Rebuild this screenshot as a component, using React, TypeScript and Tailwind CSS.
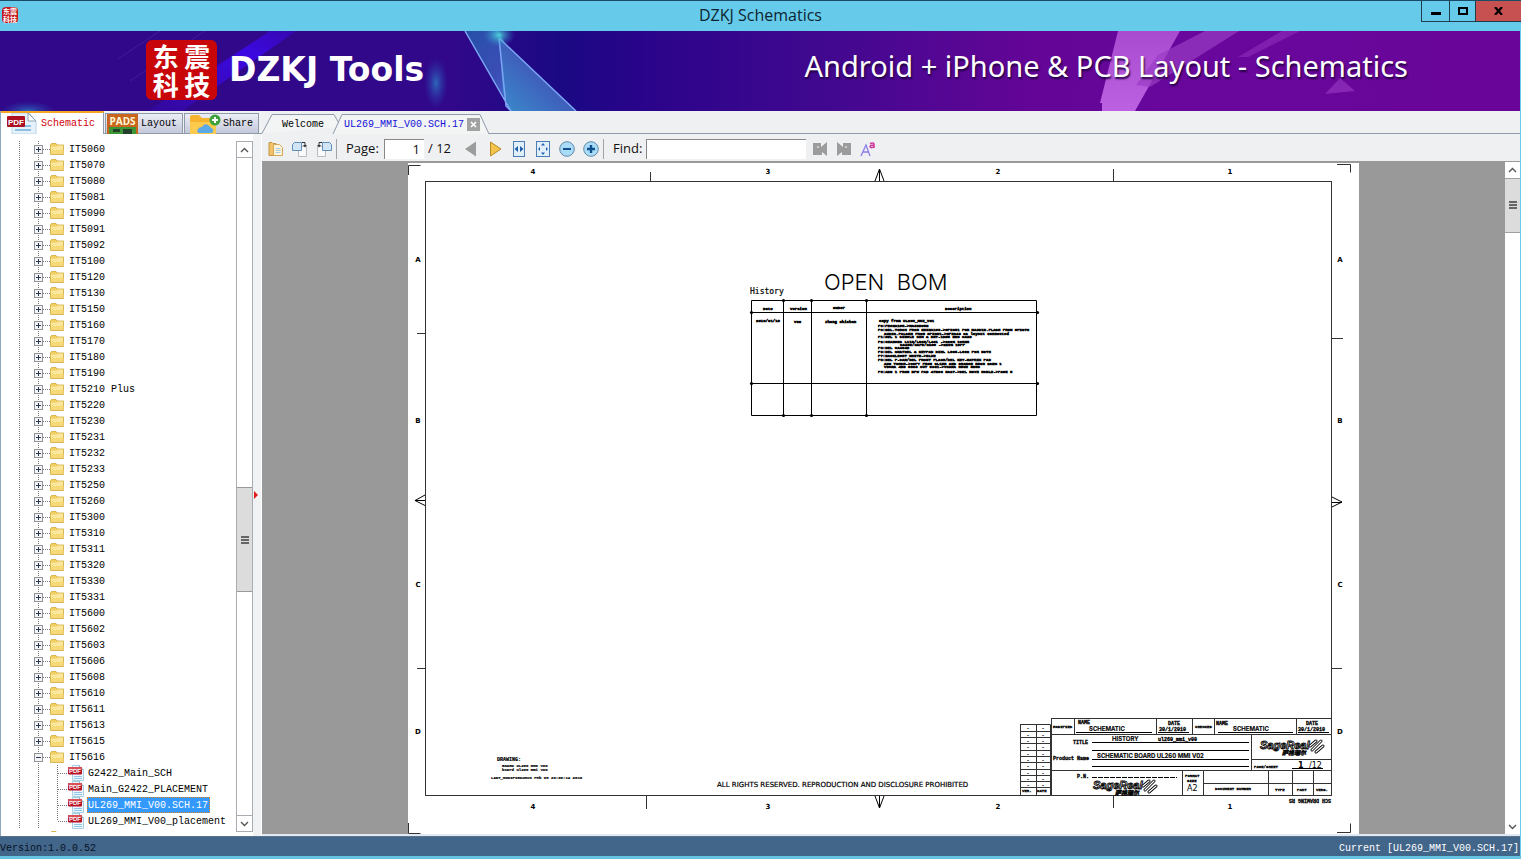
import React from 'react';

const folders = [
  'IT5060', 'IT5070', 'IT5080', 'IT5081', 'IT5090', 'IT5091', 'IT5092', 'IT5100', 'IT5120', 'IT5130',
  'IT5150', 'IT5160', 'IT5170', 'IT5180', 'IT5190', 'IT5210 Plus', 'IT5220', 'IT5230', 'IT5231', 'IT5232',
  'IT5233', 'IT5250', 'IT5260', 'IT5300', 'IT5310', 'IT5311', 'IT5320', 'IT5330', 'IT5331', 'IT5600',
  'IT5602', 'IT5603', 'IT5606', 'IT5608', 'IT5610', 'IT5611', 'IT5613', 'IT5615', 'IT5616'
];

const files = ['G2422_Main_SCH', 'Main_G2422_PLACEMENT', 'UL269_MMI_V00.SCH.17', 'UL269_MMI_V00_placement'];

const openFolder = 'IT5616';
const openFile = 'UL269_MMI_V00.SCH.17';

const FolderIcon: React.FC = () => (
  <svg width="15" height="16" viewBox="0 0 15 16" className="shrink-0">
    <path d="M.5 3.5 1.5 2.5H6l1 1.5h6.5V13.5H.5z" fill="#f0cf62" stroke="#d9b654" />
    <path d="M1 5.5h6l1-1h5V13H1z" fill="#fbe79c" />
    <path d="M1 9h12.5v4H1z" fill="#f6d978" />
  </svg>
);

const PdfIcon: React.FC = () => (
  <svg viewBox="0 0 16 16" className="h-4 w-4 shrink-0">
    <path d="M4.5.5h7l4 4v11h-11z" fill="#eef7fd" stroke="#a9cfe4" />
    <path d="M11.5.5v4h4" fill="#fff" stroke="#7fa9c2" />
    <path d="M6 11.5h8M6 13.5h8" stroke="#8cc6e8" />
    <rect x="0" y="2" width="14" height="7.500" rx="1" fill="#b90f22" />
    <rect x="0" y="2" width="14" height="3" rx="1" fill="#d8505a" />
    <text x="7" y="8" textAnchor="middle" fontSize="6" fontWeight="700" fill="#fff" fontFamily="Liberation Sans, sans-serif">PDF</text>
  </svg>
);

/* Dotted branch lines plus the expander box of a folder */
const Expander: React.FC<{ open: boolean }> = ({ open }) => (
  <svg width="16" height="16" viewBox="0 0 16 16">
    <path d="M4.500 0v16M9 8.500h7" stroke="#777" strokeDasharray="1 1" />
    <rect x=".5" y="4.500" width="8" height="8" fill="#f4f4f4" stroke="#8f9399" />
    <path d={open ? 'M2 8.500h5' : 'M2 8.500h5M4.500 6v5'} stroke="#26375a" />
  </svg>
);

const UpArrow: React.FC = () => (
  <svg width="9" height="6" viewBox="0 0 9 6"><path d="M1 5 4.500 1.500 8 5" fill="none" stroke="#555" strokeWidth="1.400" /></svg>
);

const DownArrow: React.FC = () => (
  <svg width="9" height="6" viewBox="0 0 9 6"><path d="M1 1 4.500 4.500 8 1" fill="none" stroke="#555" strokeWidth="1.400" /></svg>
);

const Grip: React.FC = () => (
  <svg width="8" height="8" viewBox="0 0 8 8"><path d="M0 1h8M0 4h8M0 7h8" stroke="#666" strokeWidth="2" /></svg>
);

const TitleBar: React.FC = () => (
  <header className="relative flex h-[31px] shrink-0 items-start justify-between border-t border-[#1b4a66] bg-[#66cbea]">
    <span className="mt-1.5 ml-0.5 grid h-4 w-4 grid-cols-2 place-items-center rounded-sm bg-[#c4161c] px-px font-['Noto_Sans_CJK_SC',sans-serif] text-[7px] leading-[7px] font-bold text-white">
      <span>东</span><span>震</span><span>科</span><span>技</span>
    </span>
    <h1 className="absolute inset-x-0 top-0 text-center font-['Open_Sans',sans-serif] text-base leading-[29px] text-[#0c2530]">DZKJ Schematics</h1>
    <div className="relative flex h-[21px] border-b border-l border-[#1f3c4a]">
      <button aria-label="Minimize" className="flex w-7 items-center justify-center border-r border-[#1f3c4a]">
        <svg width="10" height="10" viewBox="0 0 10 10"><path d="M0 7.500h10" stroke="#000" strokeWidth="3" /></svg>
      </button>
      <button aria-label="Maximize" className="flex w-[26px] items-center justify-center border-r border-[#1f3c4a]">
        <svg width="10" height="8" viewBox="0 0 10 8"><rect x="1" y="1" width="8" height="6" fill="none" stroke="#000" strokeWidth="2" /></svg>
      </button>
      <button aria-label="Close" className="flex w-[45px] items-center justify-center bg-[#c75050]">
        <svg width="9" height="8" viewBox="0 0 9 8"><path d="M1 0 8 8M8 0 1 8" stroke="#000" strokeWidth="2.200" /></svg>
      </button>
    </div>
  </header>
);

const Banner: React.FC = () => (
  <section className="relative mr-px h-20 shrink-0 overflow-hidden bg-[#6b0699]">
    <svg className="absolute inset-0 h-full w-full" viewBox="0 0 1520 80" preserveAspectRatio="xMinYMin slice">
      <defs>
        <linearGradient id="bg">
          <stop offset="0" stopColor="#300889" />
          <stop offset=".3" stopColor="#300889" />
          <stop offset=".37" stopColor="#1a0983" />
          <stop offset=".42" stopColor="#29048a" />
          <stop offset=".54" stopColor="#40088f" />
          <stop offset=".68" stopColor="#640597" />
          <stop offset=".78" stopColor="#69079c" />
          <stop offset="1" stopColor="#690599" />
        </linearGradient>
        <linearGradient id="ray" x1="0" y1="1" x2="1" y2="0">
          <stop offset="0" stopColor="#3b0ae0" stopOpacity=".2" />
          <stop offset=".7" stopColor="#3c08e2" />
          <stop offset="1" stopColor="#3c08e2" stopOpacity=".4" />
        </linearGradient>
        <linearGradient id="shard" x1="0" y1="0" x2="1" y2="1">
          <stop offset="0" stopColor="#2550a8" />
          <stop offset=".6" stopColor="#3b4db4" />
          <stop offset="1" stopColor="#4a6fd0" />
        </linearGradient>
        <linearGradient id="facet" x1="0" y1="1" x2="1" y2="0">
          <stop offset="0" stopColor="#3a8ccc" />
          <stop offset=".6" stopColor="#4055b8" />
          <stop offset="1" stopColor="#4055b8" />
        </linearGradient>
        <linearGradient id="pink" x2="0" y2="1">
          <stop offset="0" stopColor="#b052d4" />
          <stop offset="1" stopColor="#c56bea" />
        </linearGradient>
        <radialGradient id="glow">
          <stop offset="0" stopColor="#2b7fc4" stopOpacity=".8" />
          <stop offset="1" stopColor="#2b3fb4" stopOpacity="0" />
        </radialGradient>
        <radialGradient id="spark">
          <stop offset="0" stopColor="#4fe0e0" stopOpacity=".9" />
          <stop offset="1" stopColor="#2b80c4" stopOpacity="0" />
        </radialGradient>
      </defs>
      <rect width="1520" height="80" fill="url(#bg)" />
      <path d="M270 0h26L182 80h-34z" fill="url(#ray)" />
      <path d="M205 0 130 50M160 0l-42 28" stroke="#5a2bb0" strokeOpacity=".5" />
      <ellipse cx="436" cy="52" rx="12" ry="26" fill="url(#glow)" />
      <ellipse cx="28" cy="80" rx="28" ry="10" fill="url(#glow)" />
      <path d="M465 0h34l5 10 8 70z" fill="url(#shard)" />
      <path d="M499 7 576 80H511L503 62z" fill="url(#facet)" />
      <path d="M465 0 511 80M499 7l77 73M499 7l7 68 5 5" fill="none" stroke="#7ba6f4" strokeWidth="1.500" />
      <ellipse cx="499" cy="4" rx="16" ry="12" fill="url(#spark)" />
      <path d="M1118 0h62L1135 80h-33V72h-2z" fill="url(#pink)" fillOpacity=".9" />
      <path d="M1205 0h34L1150 56l-14-2 22-30z" fill="#9a3cc4" fillOpacity=".7" />
      <path d="M1282 0h18l-52 26h-10z" fill="#8626b4" fillOpacity=".8" />
      <path d="m1340 47 15 13-30 3z" fill="#8626b4" />
    </svg>
    <div className="relative flex h-full items-center justify-between pr-28 pb-0.5 pl-[146px]">
      <div className="flex items-center">
        <div className="grid h-[60px] w-[71px] grid-cols-2 content-center justify-items-center rounded-md bg-[#c8060a] px-1 font-['Noto_Sans_CJK_SC',sans-serif] text-[26px] leading-7 font-bold text-white">
          <span>东</span><span>震</span><span>科</span><span>技</span>
        </div>
        <h2 className="ml-3 font-['DejaVu_Sans',sans-serif] text-[33px] leading-10 font-bold text-white">DZKJ Tools</h2>
      </div>
      <p className="pb-2 font-['Noto_Sans',sans-serif] text-[29px] leading-10 text-white [text-shadow:1px_2px_2px_#200040]">
        Android + iPhone &amp; PCB Layout - Schematics
      </p>
    </div>
  </section>
);

const SideTabs: React.FC = () => (
  <nav className="flex h-[23px] shrink-0 items-stretch gap-px border-b border-[#8f9bab] bg-[#f0f1f2]">
    <button className="-mb-px flex w-[103px] items-center gap-1 border-t-2 border-r border-t-[#f5a623] border-r-[#8f9bab] bg-white pl-[5px] text-[#d0000c]">
      <svg width="31" height="21" viewBox="0 0 31 21">
        <path d="M6 0h17l7 8v13H6z" fill="#e6f2fb" stroke="#b8d4e6" />
        <path d="M22 0v8h8z" fill="#fff" stroke="#8fa5b4" />
        <path d="M9 13h16M9 17h16" stroke="#8ebfe0" strokeWidth="2" />
        <rect x="1" y="3" width="18" height="11" rx="1" fill="#ad1020" />
        <text x="10" y="12" textAnchor="middle" fontSize="8" fontWeight="700" fill="#fff" fontFamily="Liberation Sans, sans-serif">PDF</text>
      </svg>
      Schematic
    </button>
    <button className="mt-0.5 flex w-[78px] items-center gap-[3px] border border-b-0 border-[#8f9bab] bg-linear-to-b from-[#eceef6] to-[#c4c8da] pl-px">
      <svg width="31" height="20" viewBox="0 0 31 20">
        <rect width="31" height="20" fill="#c8651e" />
        <rect x="2" y="13" width="27" height="7" fill="#3c9636" />
        <path d="M6 15h7v3H6zM16 15h9v5h-9z" fill="#23402a" />
        <text x="15.500" y="11" textAnchor="middle" fontSize="10" fontWeight="700" fill="#fff8d8" fontFamily="Open Sans, sans-serif">PADS</text>
      </svg>
      Layout
    </button>
    <button className="mt-0.5 flex w-[75px] items-center gap-0.5 border border-b-0 border-[#8f9bab] bg-linear-to-b from-[#eceef6] to-[#c4c8da] pl-1">
      <svg width="32" height="20" viewBox="0 0 32 20">
        <path d="M1 3q0-2 2-2h7l3 3h12q2 0 2 2v14H1z" fill="#f5b32e" />
        <path d="M1 8h26v12H1z" fill="#fcca4c" />
        <path d="M10 19q-3-1-1-4 1-2 4-2 2-4 6-2 3 2 3 3 4 1 1 5z" fill="#5ba9e6" />
        <circle cx="26" cy="6" r="5.500" fill="#3ea23c" />
        <path d="M26 3v6M23 6h6" stroke="#fff" strokeWidth="2" />
      </svg>
      Share
    </button>
  </nav>
);

const Sidebar: React.FC = () => (
  <aside className="flex w-[262px] shrink-0 flex-col border-l border-[#8fa6bb] bg-white text-[10px]">
    <SideTabs />
    <div className="flex min-h-0 flex-1">
      <ul className="mt-[7px] mb-1 min-w-0 flex-1 overflow-hidden">
        {folders.map((name) => (
          <li key={name} className="flex h-4 items-center">
            <svg width="33" height="16" viewBox="0 0 33 16" className="shrink-0"><path d="M18.500 0v16" stroke="#777" strokeDasharray="1 1" /></svg>
            <button aria-label={name} aria-expanded={name === openFolder} className="shrink-0"><Expander open={name === openFolder} /></button>
            <FolderIcon />
            <span className="ml-1">{name}</span>
          </li>
        ))}
        {files.map((name, index) => (
          <li key={name} className="flex h-4 items-center">
            <svg width="67" height="16" viewBox="0 0 67 16" className="shrink-0">
              <path d={index === files.length - 1 ? 'M18.500 0v16M37.500 0v16M56.500 0v8M57 8.500h10' : 'M18.500 0v16M37.500 0v16M56.500 0v16M57 8.500h10'} stroke="#777" strokeDasharray="1 1" />
            </svg>
            <PdfIcon />
            <button
              className={name === openFile
                ? 'ml-[3px] flex h-4 items-center border border-dotted border-[#e08020] bg-[#3399ff] pr-px text-white'
                : 'ml-1 flex h-4 items-center'}
            >
              {name}
            </button>
          </li>
        ))}
        <li className="flex h-4 pl-[49px]"><FolderIcon /></li>
      </ul>
      <div className="mt-[7px] mb-1 flex w-[17px] flex-col border-x border-[#a9adb2]">
        <button aria-label="Scroll up" className="flex h-[17px] shrink-0 items-center justify-center border-y border-[#a9adb2]"><UpArrow /></button>
        <div className="grow-[331] basis-0"></div>
        <div className="flex grow-[103] basis-0 items-center justify-center border-y border-[#999] bg-[#dcdcdc]"><Grip /></div>
        <div className="grow-[224] basis-0"></div>
        <button aria-label="Scroll down" className="flex h-[17px] shrink-0 items-center justify-center border-y border-[#a9adb2]"><DownArrow /></button>
      </div>
      {/* Splitter */}
      <div className="flex w-[9px] items-center border-r border-white bg-[#f0f2f3] pt-5">
        <svg width="6" height="10" viewBox="0 0 6 10"><path d="M1 1v8l4-4z" fill="#e01818" /></svg>
      </div>
    </div>
  </aside>
);

const DocumentTabs: React.FC = () => (
  <nav className="relative flex h-[23px] shrink-0 items-center bg-[#eff0f1] pt-1 text-[10px]">
    <svg className="absolute top-0 left-0" width="230" height="23" viewBox="0 0 230 23">
      <path d="M0 22.500 10 3.500H72L79 16" fill="#f3f4f4" stroke="#8f9bab" />
      <path d="M71 23 80 3.500H218L227 23" fill="#f3f4f4" stroke="#8f9bab" />
    </svg>
    <div className="absolute right-0 bottom-0 left-[227px] border-b border-[#8f9bab]"></div>
    <button className="relative ml-5">Welcome</button>
    <button className="relative ml-5 text-[#1212d8]">UL269_MMI_V00.SCH.17</button>
    <button aria-label="Close tab" className="relative ml-[3px] flex h-[13px] w-[13px] items-center justify-center bg-[#a2a2a2]">
      <svg width="7" height="7" viewBox="0 0 7 7"><path d="m1 1 5 5M6 1 1 6" stroke="#fff" strokeWidth="1.600" /></svg>
    </button>
  </nav>
);

const ToolButton: React.FC<{ label: string; children: React.ReactNode }> = ({ label, children }) => (
  <button aria-label={label} className="flex h-6 w-6 shrink-0 items-center justify-center">
    <svg width="16" height="16" viewBox="0 0 16 16" fill="none">{children}</svg>
  </button>
);

const Toolbar: React.FC = () => (
  <div className="flex h-[28px] shrink-0 items-center border-b border-[#999] bg-[#eff0f1] pt-0.5 pl-0.5 font-['Open_Sans',sans-serif] text-[13px] text-[#111]">
    <ToolButton label="Open">
      <path d="M1 1.500h3l1 1h3v12H1z" fill="#f0c36a" stroke="#c69340" />
      <path d="M5.500 3.500h6l3 3v8h-9z" fill="#fff4d8" stroke="#d5a75a" />
      <path d="M7.500 7.500h5M7.500 9.500h5M7.500 11.500h5" stroke="#a8cbe8" />
    </ToolButton>
    <ToolButton label="Rotate right">
      <path d="M6.500 5.500h8v10h-8z" fill="#fafafa" stroke="#bcbcbc" />
      <path d="M.5 3.500l2-2h7v8h-9z" fill="#d2e5f5" stroke="#5f8fb8" />
      <path d="M10 1.500h3v3" stroke="#333" />
      <path d="m11 4 2 2.500L15 4z" fill="#333" />
    </ToolButton>
    <ToolButton label="Rotate left">
      <path d="M1.500 5.500h8v10h-8z" fill="#fafafa" stroke="#bcbcbc" />
      <path d="M6.500 1.500h7l2 2v6h-9z" fill="#d2e5f5" stroke="#5f8fb8" />
      <path d="M6 1.500H3v3" stroke="#333" />
      <path d="m1 4 2 2.500L5 4z" fill="#333" />
    </ToolButton>
    <div className="h-5 border-l border-[#a0a4a8]"></div>
    <label htmlFor="page" className="ml-[9px] w-[38px] shrink-0">Page:</label>
    <input id="page" defaultValue="1" className="h-5 w-10 border-t border-l border-[#888] bg-white pr-1 text-right" />
    <span className="ml-1 w-[31px] shrink-0 whitespace-nowrap">/ 12</span>
    <ToolButton label="Previous page"><path d="M13 .5v15L2 8z" fill="#9c9c9c" /></ToolButton>
    <ToolButton label="Next page"><path d="M3.500 1v14L14 8z" fill="#f3c44c" stroke="#b88a2a" /></ToolButton>
    <ToolButton label="Fit width">
      <rect x="2.500" y=".5" width="11" height="15" fill="#e1effb" stroke="#4a7db4" />
      <path d="M7 5v6L3.500 8zM9 5v6l3.500-3z" fill="#1f5fae" />
    </ToolButton>
    <ToolButton label="Fit page">
      <rect x="1.500" y=".5" width="13" height="15" fill="#e1effb" stroke="#4a7db4" />
      <path d="M8 2l2 2.500H6zM8 14l2-2.500H6zM3 8l2-2v4zM13 8l-2-2v4z" fill="#1f5fae" />
    </ToolButton>
    <ToolButton label="Zoom out">
      <circle cx="8" cy="8" r="7.300" fill="#a8dcf8" stroke="#6289a6" />
      <path d="M4 8h8" stroke="#0e4f8c" strokeWidth="2" />
    </ToolButton>
    <ToolButton label="Zoom in">
      <circle cx="8" cy="8" r="7.300" fill="#a8dcf8" stroke="#6289a6" />
      <path d="M4 8h8M8 4v8" stroke="#0e4f8c" strokeWidth="2.400" />
    </ToolButton>
    <div className="h-5 border-l border-[#a0a4a8]"></div>
    <label htmlFor="find" className="ml-[9px] w-[33px] shrink-0">Find:</label>
    <input id="find" className="h-5 w-40 border-t border-l border-[#888] bg-white px-1" />
    <div className="ml-0.5 flex">
      <ToolButton label="Find previous"><path d="M1 2h8v4l6-5v14l-5-4v3H1z" fill="#9c9c9c" /><circle cx="6" cy="6" r="1" fill="#ddd" /></ToolButton>
      <ToolButton label="Find next"><path d="M15 2H7v4L1 1v14l5-4v3h9z" fill="#9c9c9c" /><circle cx="10" cy="6" r="1" fill="#ddd" /></ToolButton>
      <ToolButton label="Match case">
        <path d="M1 15 6 4l4 11M3 11h6" stroke="#8a7fe8" strokeWidth="1.300" />
        <path d="M10 2.500q4-1.500 4 1V7M14 4q-4 0-4 1.700 1 2 4 0" stroke="#d0389c" strokeWidth="1.500" />
      </ToolButton>
    </div>
  </div>
);

const historyNotes = [
  { x: 879, y: 322, text: 'Copy from UL268_MMI_V01' },
  { x: 878, y: 327, text: 'P0:PECNA1GR->MA3DB05N' },
  { x: 878, y: 331, text: 'P0:DEL.TORCH FROM ZBINA1G9->GPIO51 FOR MA3D1N.FLASH FROM GPIO70' },
  { x: 884, y: 335, text: 'AUDIO.PALSEN FROM GPIO51->GPIO43 as layout connected' },
  { x: 878, y: 338, text: 'P1:DEL 1 SINGLE SIM & DET-1DB5 NEO CA3D' },
  { x: 878, y: 343, text: 'P2:CHANGES L115/L805/L401 ->220% 10RNH' },
  { x: 900, y: 346, text: 'CA405/CAF5/CAGG ->220% 10PF' },
  { x: 878, y: 349, text: 'P3:DEL CA404D' },
  { x: 878, y: 353, text: 'P3:DEL SMA7DEL & KEYPAD DIEL L805-L802 FOR BOTH' },
  { x: 878, y: 357, text: 'P7:BACKLIGHT WHITE->BLUE' },
  { x: 878, y: 361, text: 'P8:DEL F-CAM/DEL FRONT FLASH/DEL KEY-MATRIX PAD' },
  { x: 884, y: 365, text: 'ADD TORCH->COPY FROM SL15H AND CHANGE R50H 20N% 1' },
  { x: 884, y: 368, text: 'VDCMA 4BD 5803 CUT 0S01->VCAMA R50H 5N50' },
  { x: 878, y: 373, text: 'P9:ADD 1 FROM BPW PAD 47N06 5AS7->DEL MOVE HCBLE->PAGE 5' }
];

const columnLabels = [
  { x: 533, text: '4' }, { x: 768, text: '3' }, { x: 998, text: '2' }, { x: 1230, text: '1' }
];

const rowLabels = [
  { y: 262, text: 'A' }, { y: 423, text: 'B' }, { y: 587, text: 'C' }, { y: 734, text: 'D' }
];

const joints = [
  [783, 300], [811, 300], [866, 300], [751, 312], [1037, 312],
  [751, 383], [1037, 383], [783, 415], [811, 415], [866, 415]
];

const revisionRows = [731, 737, 743, 750, 756, 762, 769, 775, 781, 787];

const SageRealLogo: React.FC<{ x: number; y: number }> = ({ x, y }) => (
  <g transform={`translate(${x} ${y})`}>
    <text x="0" y="10" fontSize="11" fontWeight="700" fontStyle="italic" fill="#fff" stroke="#000" strokeWidth=".9" fontFamily="Liberation Sans, sans-serif">SageReal</text>
    <text x="22" y="16" fontSize="6" fontWeight="900" fontStyle="italic" stroke="#000" strokeWidth=".4">萨格瑞尔</text>
    <path d="m50 7 6-5M52 11l9-9M56 13l7-6" stroke="#000" strokeWidth="3" strokeLinecap="round" />
    <path d="m50 7 6-5M52 11l9-9M56 13l7-6" stroke="#fff" strokeWidth="1.200" strokeLinecap="round" />
  </g>
);

/* First sheet of the schematic, in sheet coordinates */
const Sheet: React.FC = () => (
  <svg
    viewBox="408 163 951 671"
    className="aspect-[951/671] h-full bg-white font-['Liberation_Mono','Noto_Sans_CJK_SC',monospace]"
    fill="#000"
    role="img"
    aria-label="UL269_MMI_V00 history sheet"
  >
    {/* Frame and crop marks */}
    <g fill="none" stroke="#333">
      <rect x="425.500" y="181.500" width="906" height="614" />
      <path d="M408.500 175v-9.500h12M1337 164.500h13.500v8M408.500 823v10.500h12M1337 832.500h13.500v-9" />
      <path d="M650.500 172v9M1113.500 169v12M646.500 796v13M1113.500 796v12M417 333.500h8M417 668.500h8M1332 338.500h11M1332 668.500h10" />
      <path d="m875 181 4.500-12 4.500 12M879.500 169v12M875 796l4.500 12 4.500-12M879.500 796v12" stroke="#000" />
      <path d="m425 495-10 5.500 10 5M415 500.500h10M1332 497l10 5-10 5M1332 502.500h10" stroke="#000" />
    </g>
    <g fontSize="7" fontWeight="700" textAnchor="middle" fontFamily="DejaVu Sans, sans-serif">
      {columnLabels.map((label) => (
        <React.Fragment key={label.text}>
          <text x={label.x} y="174">{label.text}</text>
          <text x={label.x} y="809">{label.text}</text>
        </React.Fragment>
      ))}
      {rowLabels.map((label) => (
        <React.Fragment key={label.text}>
          <text x="418" y={label.y}>{label.text}</text>
          <text x="1340" y={label.y}>{label.text}</text>
        </React.Fragment>
      ))}
    </g>

    {/* History table */}
    <text x="824" y="290" fontSize="22" fontWeight="300" fontFamily="Inter, sans-serif">OPEN&nbsp; BOM</text>
    <text x="750" y="294" fontSize="8" fontFamily="DejaVu Sans Mono, monospace" stroke="#000" strokeWidth=".2">History</text>
    <path d="M751.500 300.500h285v115h-285zM751 312.500h286M751 383.500h286M783.500 300v115M811.500 300v115M866.500 300v115" fill="none" stroke="#000" />
    {joints.map(([x, y]) => (
      <circle key={`${x}-${y}`} cx={x + 0.5} cy={y + 0.5} r="1.600" />
    ))}
    <g fontSize="4" fontWeight="700" stroke="#000" strokeWidth=".5">
      <text x="763" y="310">Date</text>
      <text x="790" y="310">Version</text>
      <text x="833" y="309">Owner</text>
      <text x="945" y="310">Description</text>
      <text x="756" y="322">2010/01/18</text>
      <text x="794" y="323">V00</text>
      <text x="825" y="323">zhang chishan</text>
      {historyNotes.map((note) => (
        <text key={note.y} x={note.x} y={note.y}>{note.text}</text>
      ))}
    </g>

    {/* Drawing footer */}
    <g fontSize="5" fontWeight="700" stroke="#000" strokeWidth=".2">
      <text x="497" y="761">DRAWING:</text>
      <text x="502" y="767" fontSize="4">BOARD UL260 MMI V00</text>
      <text x="502" y="771" fontSize="4">board ul260 mmi v00</text>
      <text x="491" y="779" fontSize="4">LAST_MODIFIED=Mon Feb 08 20:30:14 2010</text>
    </g>
    <text x="717" y="787" fontSize="7" fontFamily="DejaVu Sans, sans-serif" stroke="#000" strokeWidth=".2">ALL RIGHTS RESERVED. REPRODUCTION AND DISCLOSURE PROHIBITED</text>

    {/* Title block */}
    <g fill="none" stroke="#333">
      <path d="M1020.500 724.500h30v71M1020.500 724v71M1036.500 724v71" />
      {revisionRows.map((y) => (
        <path key={y} d={`M1020 ${y + 0.5}h31`} />
      ))}
      <path d="M1051.500 719v76M1051 718.500h280M1051 734.500h280M1051 770.500h280M1251 759.500h80M1203 783.500h128" />
      <path d="M1074.500 719v16M1156.500 719v16M1192.500 719v16M1214.500 719v16M1296.500 719v16M1251.500 735v36M1182.500 771v24M1203.500 771v24M1268.500 771v24M1292.500 771v24M1313.500 771v24" />
      <path d="M1076 732.500h76M1218 732.500h75M1158 732.500h31M1298 732.500h31M1092 742.500h157M1092 750.500h157M1092 759.500h157M1092 766.500h157M1292 768.500h31" stroke="#000" />
      <path d="M1092 777.500h85" stroke="#000" strokeDasharray="5 1" />
    </g>
    <g fontSize="6" textAnchor="middle" fontWeight="700">
      {[724, ...revisionRows.slice(0, 9)].map((y) => (
        <React.Fragment key={y}>
          <text x="1028" y={y + 6}>-</text>
          <text x="1043" y={y + 6}>-</text>
        </React.Fragment>
      ))}
    </g>
    <g fontSize="5" fontWeight="700" stroke="#000" strokeWidth=".3">
      <text x="1022" y="792" fontSize="4">VER.</text>
      <text x="1037" y="792" fontSize="4">DATE</text>
      <text x="1053" y="728" fontSize="4">MODIFIED</text>
      <text x="1078" y="724">NAME</text>
      <text x="1168" y="725">DATE</text>
      <text x="1159" y="731">30/1/2010</text>
      <text x="1195" y="728" fontSize="4">CHECKED</text>
      <text x="1216" y="725">NAME</text>
      <text x="1306" y="725">DATE</text>
      <text x="1298" y="731">30/1/2010</text>
      <text x="1073" y="744">TITLE</text>
      <text x="1158" y="741">ul260_mmi_v00</text>
      <text x="1053" y="760">Product Name</text>
      <text x="1254" y="768" fontSize="4">PAGE/SHEET</text>
      <text x="1077" y="778">P.N.</text>
      <text x="1185" y="777" fontSize="4">FORMAT</text>
      <text x="1187" y="782" fontSize="4">SIZE</text>
      <text x="1215" y="790" fontSize="4">DOCUMENT NUMBER</text>
      <text x="1275" y="791" fontSize="4">TYPE</text>
      <text x="1297" y="791" fontSize="4">PART</text>
      <text x="1316" y="791" fontSize="4">VERS.</text>
      <text transform="rotate(180 1309 801)" x="1287" y="803">SCH DRAWING RS</text>
    </g>
    <g fontSize="6" fontWeight="600" fontFamily="Inter, sans-serif" stroke="#000" strokeWidth=".2">
      <text x="1089" y="731">SCHEMATIC</text>
      <text x="1233" y="731">SCHEMATIC</text>
      <text x="1112" y="741">HISTORY</text>
      <text x="1097" y="758">SCHEMATIC BOARD UL260 MMI V02</text>
    </g>
    <g fontSize="8" fontFamily="DejaVu Sans, sans-serif">
      <text x="1187" y="791">A2</text>
      <text x="1298" y="768" fontWeight="700">1</text>
      <text x="1309" y="768">/12</text>
    </g>
    <SageRealLogo x={1260} y={739} />
    <SageRealLogo x={1093} y={779} />
  </svg>
);

const Viewer: React.FC = () => (
  <main className="flex min-w-0 flex-1 flex-col border-r border-[#66cbea]">
    <DocumentTabs />
    <Toolbar />
    <div className="flex min-h-0 flex-1">
      <div className="flex min-w-0 flex-1 justify-center overflow-hidden border-t border-[#999] bg-[#999]">
        <Sheet />
      </div>
      <div className="flex w-[15px] shrink-0 flex-col bg-white">
        <button aria-label="Page up" className="flex h-4 shrink-0 items-center justify-center"><UpArrow /></button>
        <div className="flex grow-[53] basis-0 items-center justify-center border-y border-[#a0a0a0] bg-[#dcdcdc]"><Grip /></div>
        <div className="grow-[589] basis-0"></div>
        <button aria-label="Page down" className="flex h-[15px] shrink-0 items-center justify-center"><DownArrow /></button>
      </div>
    </div>
    <div className="h-0.5 shrink-0 bg-[#dfeaf4]"></div>
  </main>
);

const App: React.FC = () => {
  return (
    <div className="flex h-screen flex-col overflow-hidden bg-[#66cbea] font-['Liberation_Mono','Noto_Sans_CJK_SC',monospace] text-black">
      <TitleBar />
      <Banner />
      <div className="flex min-h-0 flex-1">
        <Sidebar />
        <Viewer />
      </div>
      <footer className="mr-px flex h-5 shrink-0 items-end justify-between border-t border-[#5a7490] bg-[#42658a] pr-px text-[10px] leading-[14px]">
        <span className="text-[#06121f]">Version:1.0.0.52</span>
        <span className="text-white">Current [UL269_MMI_V00.SCH.17]</span>
      </footer>
      <div className="h-[3px] shrink-0 bg-[#66c4e0]"></div>
    </div>
  );
};

export default App;
